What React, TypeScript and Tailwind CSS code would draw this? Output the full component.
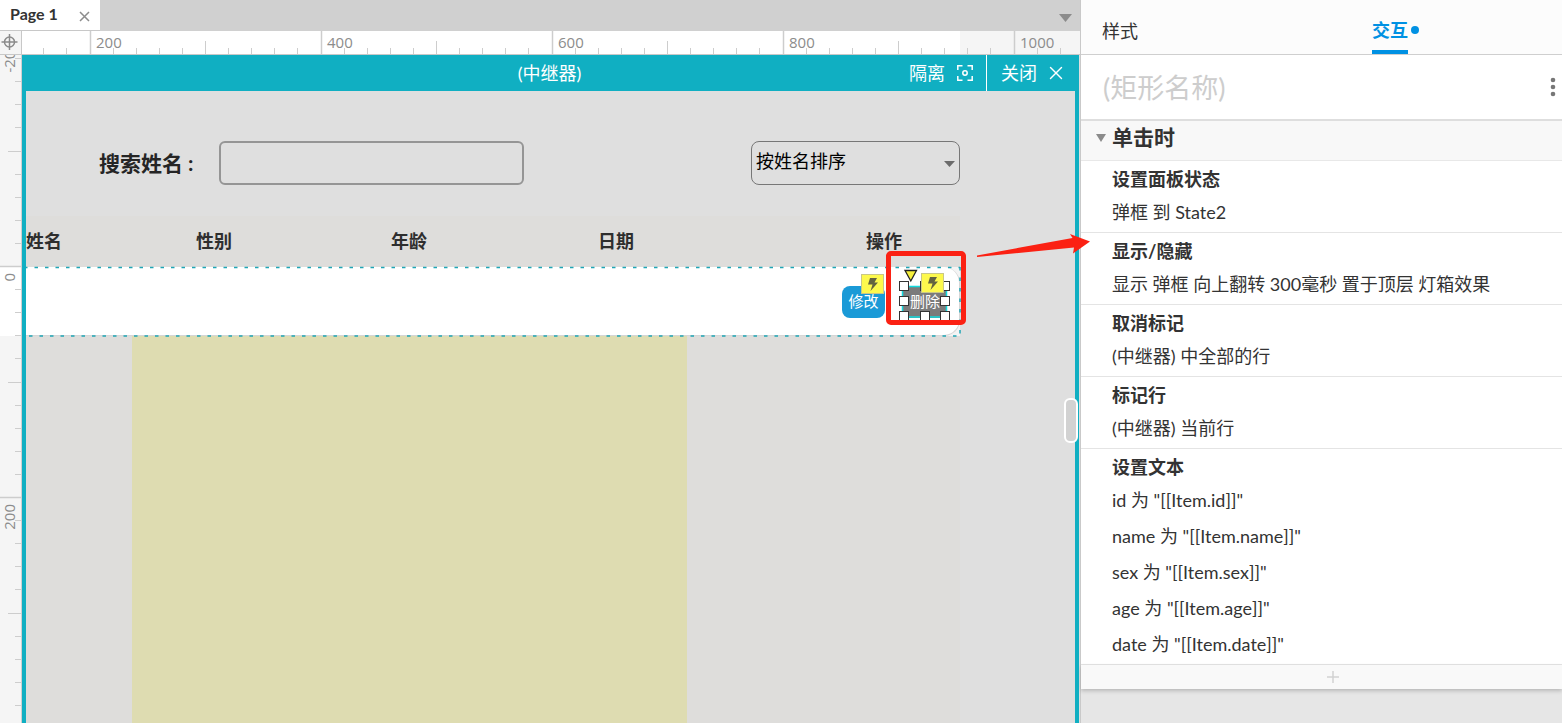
import { X } from "lucide-react";

interface Action {
  title: string;
  lines: string[];
}

const actions: Action[] = [
  { title: "设置面板状态", lines: ["弹框 到 State2"] },
  { title: "显示/隐藏", lines: ["显示 弹框 向上翻转 300毫秒 置于顶层 灯箱效果"] },
  { title: "取消标记", lines: ["(中继器) 中全部的行"] },
  { title: "标记行", lines: ["(中继器) 当前行"] },
  {
    title: "设置文本",
    lines: [
      'id 为 "[[Item.id]]"',
      'name 为 "[[Item.name]]"',
      'sex 为 "[[Item.sex]]"',
      'age 为 "[[Item.age]]"',
      'date 为 "[[Item.date]]"',
    ],
  },
];

// one tick every 20 units, 231px per 200 units
const ticks = Array.from({ length: 60 }, (_, i) => i);

function tickLength(i: number) {
  if (i % 10 === 0) return 24;
  return i % 5 === 0 ? 13 : 6;
}

function HorizontalRuler() {
  return (
    <div className="h-6 min-w-0 flex-1 overflow-hidden border-b border-[#c8c8c8] bg-[#f5f5f5]">
      <svg width="1400" height="23" className="block max-w-none">
        <rect width="938" height="23" fill="#fff" />
        {ticks.map((i) => {
          const x = Math.floor(68 + (i - 10) * 23.1);
          return (
            <path
              key={i}
              d={`M${x + 0.5} 23V${23 - tickLength(i)}`}
              stroke="#cdcdcd"
              strokeWidth={i % 10 === 0 ? 1.5 : 1}
            />
          );
        })}
        {[200, 400, 600, 800, 1000].map((n, i) => (
          <text key={n} x={74 + i * 231} y="17" fontSize="15" fill="#8c8c8c">
            {n}
          </text>
        ))}
      </svg>
    </div>
  );
}

function VerticalRuler() {
  return (
    <div className="relative w-[22px] shrink-0 overflow-hidden border-r border-[#d0d0d0] bg-[#f5f5f5]">
      <svg width="21" height="1400" className="absolute top-0 left-0 block">
        <rect y="212" width="21" height="69" fill="#fff" />
        {ticks.map((i) => {
          const y = Math.round(211 + (i - 10) * 23.1);
          return (
            <path
              key={i}
              d={`M21 ${y + 0.5}H${21 - tickLength(i)}`}
              stroke="#cdcdcd"
              strokeWidth={i % 10 === 0 ? 1.5 : 1}
            />
          );
        })}
        {[-200, 0, 200].map((n, i) => (
          <text
            key={n}
            transform={`translate(15 ${-13 + i * 231}) rotate(-90)`}
            textAnchor="end"
            fontSize="15"
            fill="#8c8c8c"
          >
            {n}
          </text>
        ))}
      </svg>
    </div>
  );
}

function Bolt({ x, y }: { x: number; y: number }) {
  return (
    <g transform={`translate(${x} ${y})`}>
      <rect x=".5" y=".5" width="22" height="19" fill="#fdf94d" stroke="#c9c787" />
      <path d="M9 4h7l-2.500 4.500H17L9.500 17l2-6.500H7z" fill="#636340" />
    </g>
  );
}

function SelectionOverlay() {
  return (
    <svg
      viewBox="880 235 215 95"
      width="215"
      height="95"
      className="pointer-events-none absolute -top-[52px] -left-6 z-10 max-w-none"
    >
      <path d="M903 287.500H948M903 318H948M903.500 287V318M947.500 287V318" stroke="#12dbe0" strokeWidth="1.500" />
      {[286.5, 301.5, 316.5].map((y, row) =>
        [904.5, 925.5, 945.5].map((x, col) =>
          row === 1 && col === 1 ? null : (
            <rect
              key={`${row}-${col}`}
              x={x - 4}
              y={y - 4}
              width="9"
              height="9"
              fill="#fff"
              stroke="#333"
            />
          ),
        )
      )}
      <path d="M906 271.500h11.500L911.800 282z" fill="#f7f03c" stroke="#222" strokeWidth="1.300" />
      <Bolt x={922} y={274} />
      <rect x="889.500" y="254.500" width="75" height="69" rx="2.500" fill="none" stroke="#fb2113" strokeWidth="5" />
      <path d="M978 256.500L1073.500 239L1071 235L1091 242.500L1074 254.500L1075 248.500L978 258Z" fill="#fb2113" />
    </svg>
  );
}

function TitleBar() {
  return (
    <div className="flex h-9 shrink-0 items-center bg-[#10afc2] text-lg text-white">
      <div className="flex-1 pl-[180px] text-center">(中继器)</div>
      <button className="flex h-9 items-center gap-3 pr-[13px] pl-3">
        隔离
        <svg width="16" height="16" viewBox="0 0 16 16" fill="none" stroke="#fff" strokeWidth="1.500">
          <path d="M.8 5V.8H5.500M10.500.8H15.200V5M15.200 11v4.200H10.500M5.500 15.200H.8V11" />
          <circle cx="8" cy="8" r="2.200" />
        </svg>
      </button>
      <button className="flex h-9 items-center gap-2 border-l border-white pr-3 pl-3.5">
        关闭
        <X size={22} strokeWidth={1.5} />
      </button>
    </div>
  );
}

function Stage() {
  return (
    <div className="relative flex flex-1 flex-col border-x-4 border-[#10afc2] bg-[#dfdfdf]">
      <div className="flex w-[934px] items-center pt-[50px] pb-[31px] pl-[73px]">
        <label htmlFor="search" className="w-[105px] text-[21px] font-bold text-[#252525]">
          搜索姓名 :
        </label>
        <input
          id="search"
          className="ml-[15px] h-11 w-[305px] rounded-md border-2 border-[#959595] px-2"
        />
        <div className="relative ml-auto">
          <select
            aria-label="排序"
            className="h-11 w-[209px] appearance-none rounded-lg border border-[#777] px-1 pb-1 text-lg text-black"
          >
            <option>按姓名排序</option>
          </select>
          <svg width="12" height="6" className="pointer-events-none absolute top-5 right-1">
            <path d="M0 0h11L5.500 6z" fill="#6b6b6b" />
          </svg>
        </div>
      </div>
      <div className="flex w-[934px] flex-1 flex-col bg-[#dedddb]">
        <table className="w-full table-fixed">
          <thead>
            <tr className="h-[51px] text-left text-lg text-[#2e2e2e]">
              <th className="w-[170px] pb-0.5">姓名</th>
              <th className="w-[195px] pb-0.5">性别</th>
              <th className="w-[207px] pb-0.5">年龄</th>
              <th className="w-[268px] pb-0.5">日期</th>
              <th className="pb-0.5">操作</th>
            </tr>
          </thead>
          <tbody>
            <tr>
              <td colSpan={5} className="relative h-[69px] bg-[#f4f4f4]">
                <div className="flex h-[69px] items-center justify-end gap-[18px] rounded-r-2xl border-r border-b border-[#d6d6d6] bg-white pt-0.5 pr-3 text-[15px] text-white">
                  <div className="relative">
                    <button className="block h-8 w-[43px] rounded-lg bg-[#1a9ad7] pb-0.5">修改</button>
                    <svg width="23" height="20" className="absolute -top-3 right-px">
                      <Bolt x={0} y={0} />
                    </svg>
                  </div>
                  <div className="relative">
                    <button className="block h-8 w-11 bg-[#7b7b7b] pb-0.5">删除</button>
                    <SelectionOverlay />
                  </div>
                </div>
                <svg
                  className="pointer-events-none absolute top-0 left-0 h-full w-full overflow-visible"
                  stroke="#1fa5b5"
                  strokeWidth="1.500"
                  strokeDasharray="3.500 7"
                >
                  <line x1="0" y1="0.500" x2="100%" y2="0.500" strokeDashoffset="-8.500" />
                  <line x1="100%" y1="0" x2="100%" y2="100%" />
                  <line x1="0" y1="100%" x2="100%" y2="100%" strokeDashoffset="-3" />
                </svg>
              </td>
            </tr>
          </tbody>
        </table>
        <div className="ml-[106px] w-[555px] flex-1 bg-[#dedcb1]" />
      </div>
      <div className="absolute top-[307px] -right-[3px] h-[45px] w-3.5 rounded-md border-2 border-white bg-[#d2d2d2]" />
    </div>
  );
}

function InteractionPanel() {
  return (
    <aside className="flex w-[482px] shrink-0 flex-col border-l border-[#c9c9c9] bg-[#e6e6e6] text-lg text-[#333]">
      <nav className="flex h-[55px] items-end gap-[234px] border-b border-[#cfcfcf] bg-[#fcfcfc] pl-[21px]">
        <button className="h-11 pb-[3px]">样式</button>
        <button className="relative h-11 border-b-4 border-[#0091e3] font-bold text-[#0091e3]">
          交互
          <span className="absolute top-4 -right-[11px] h-2 w-2 rounded-full bg-[#0091e3]" />
        </button>
      </nav>
      <div className="flex h-[66px] items-center justify-between border-b-2 border-[#dedede] bg-white pl-[22px]">
        <input
          aria-label="名称"
          placeholder="(矩形名称)"
          className="w-80 pt-0.5 text-[27px] placeholder:text-[#cdcdcd]"
        />
        <button aria-label="更多" className="pr-1.5">
          <svg width="6" height="20" fill="#777">
            <circle cx="3" cy="3" r="2.300" />
            <circle cx="3" cy="10" r="2.300" />
            <circle cx="3" cy="17" r="2.300" />
          </svg>
        </button>
      </div>
      <button className="flex h-10 items-center gap-1.5 border-b border-[#e8e8e8] bg-[#f8f8f8] pb-1.5 pl-[15px]">
        <svg width="10" height="8">
          <path d="M0 0h10L5 8z" fill="#8b8b8b" />
        </svg>
        <span className="text-[21px] font-bold">单击时</span>
      </button>
      {actions.map((action) => (
        <section
          key={action.title}
          className="border-b border-[#e4e4e4] bg-white pt-2 pb-0.5 pl-[31px]"
        >
          <h3 className="mb-[5px] leading-5 font-bold">{action.title}</h3>
          {action.lines.map((line) => (
            <p key={line} className="leading-9">
              {line}
            </p>
          ))}
        </section>
      ))}
      <button
        aria-label="添加"
        className="flex h-6 shrink-0 items-center justify-center bg-[#f9f9f9] pl-[22px] shadow-[0_2px_4px_rgba(0,0,0,0.2)]"
      >
        <svg width="12" height="12" stroke="#d2d2d2" strokeWidth="1.500">
          <path d="M6 0v12M0 6h12" />
        </svg>
      </button>
    </aside>
  );
}

export default function App() {
  return (
    <div className="flex min-h-screen font-['Lato','Noto_Sans_CJK_SC',sans-serif]">
      <main className="flex min-w-0 flex-1 flex-col bg-[#dfdfdf]">
        <div className="flex h-[31px] items-center justify-between bg-[#d0d0d0] pr-2">
          <div className="flex h-full w-[100px] items-center justify-between border-b border-[#c8c8c8] bg-white pr-2.5 pb-0.5 pl-2.5">
            <span className="text-base font-bold text-[#333]">Page 1</span>
            <button aria-label="关闭页面" className="pt-1 text-[#8c8c8c]">
              <svg width="11" height="11" stroke="currentColor" strokeWidth="1.500">
                <path d="M1 1l9 9M10 1l-9 9" />
              </svg>
            </button>
          </div>
          <button aria-label="页面列表" className="pt-1">
            <svg width="13" height="8">
              <path d="M0 0h13L6.500 8z" fill="#8b8b8b" />
            </svg>
          </button>
        </div>
        <div className="flex font-['Open_Sans',sans-serif]">
          <div className="h-6 w-[22px] shrink-0 border-r border-b border-[#c8c8c8] bg-[#f5f5f5]">
            <svg width="18" height="18" className="mt-0.5" fill="none" stroke="#8a8a8a" strokeWidth="1.500">
              <circle cx="9.500" cy="9" r="5" />
              <path d="M9.500 1v16M1.500 9h16" />
            </svg>
          </div>
          <HorizontalRuler />
        </div>
        <div className="flex flex-1">
          <div className="flex font-['Open_Sans',sans-serif]">
            <VerticalRuler />
          </div>
          <div className="flex min-w-0 flex-1 flex-col pr-px">
            <TitleBar />
            <Stage />
          </div>
        </div>
      </main>
      <InteractionPanel />
    </div>
  );
}
